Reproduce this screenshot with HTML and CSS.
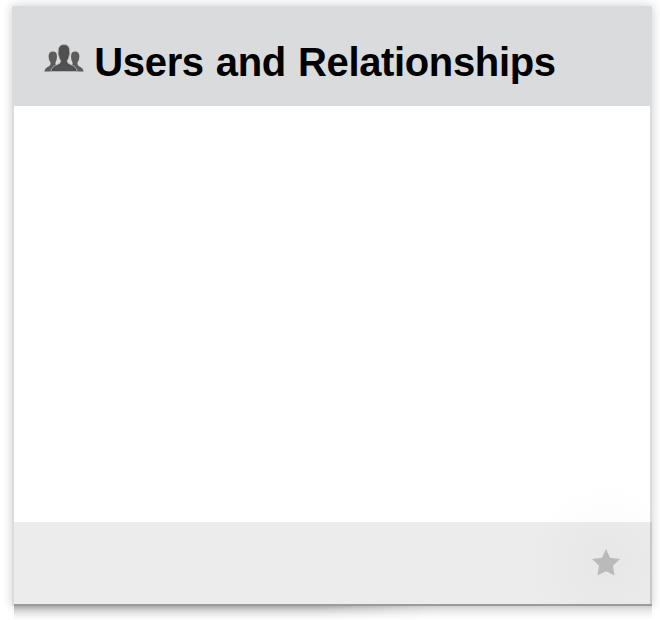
FILE: index.html
```html
<!DOCTYPE html>
<html lang="en">
<head>
<meta charset="utf-8">
<title>Users and Relationships</title>
<link rel="stylesheet" href="styles.css">
</head>
<body>
<section class="card">
  <header class="card-header">
    <svg class="users-icon" viewBox="0 0 40 28" aria-hidden="true">
      <g class="person-side">
        <path id="side" d="M0.300 27.500Q0.500 24.500 3.500 23Q7 21.500 6.500 18.500Q4.600 16 4.600 12.500Q4.600 7.500 9 7.500Q13 7.500 13 12.500Q13 16 11.500 18.500L11.500 20.500L14 22L7.500 27.500Z"/>
        <use href="#side" transform="translate(40 0) scale(-1 1)"/>
      </g>
      <path class="person-main" d="M6.800 27.500Q7.500 22.500 13.500 20.500Q17 19.300 16.600 16.500Q14.900 14.500 14.600 11.500Q13.600 10 14.200 8Q13.800 0.500 20 0.500Q26 0.500 25.700 8Q26.300 10 25.300 11.500Q25 14.500 23.300 16.500Q23 19.300 26.500 20.500Q32.500 22.500 33.200 27.500Z"/>
    </svg>
    <h1 class="title">Users and Relationships</h1>
  </header>
  <div class="card-body"></div>
  <footer class="card-footer">
    <svg class="star-icon" viewBox="0 0 28 27" aria-hidden="true">
      <path d="M14 0L18 8.700L28 10L20.900 16.800L22.600 26.500L14 22.300L5.400 26.500L7.100 16.800L0 10L10 8.700Z"/>
    </svg>
  </footer>
</section>
</body>
</html>
```

FILE: styles.css
```css
* {
  box-sizing: border-box;
}

body {
  margin: 0;
  height: 620px;
  padding: 6px 8px 0 12px;
  overflow: hidden;
  background: #fff;
  font-family: "Liberation Sans", Arial, sans-serif;
}

.card {
  position: relative;
  display: flex;
  flex-direction: column;
  width: 640px;
  height: 600px;
  border: 2px solid #dcdcdd;
  border-top: 0;
  border-bottom: 0;
  background: #fff;
  box-shadow: 0 0 10px rgba(0, 0, 0, 0.2);
}

/* Soft shade along the lower edge, fading to the right */
.card::after {
  content: "";
  position: absolute;
  left: 0;
  right: -2px;
  top: 598px;
  height: 16px;
  background:
    linear-gradient(90deg, transparent 48%, rgba(255, 255, 255, 0.45) 66%) 0 2px no-repeat,
    linear-gradient(#9b9c9c 0 2px, #aaa 2px, #d2d2d2 6px, #efefef 11px, #fff 16px);
}

.card-header {
  display: flex;
  align-items: flex-start;
  gap: 11px;
  height: 100px;
  margin: 0 -2px;
  padding: 38px 0 0 32px;
  background: #dadbdd;
}

.users-icon {
  width: 40px;
  height: 28px;
}

.person-side {
  fill: #5c5c5c;
}

.person-main {
  fill: #505050;
  stroke: #b9babb;
  stroke-width: 0.8;
}

.title {
  margin: -5px 0 0 -0.7px;
  font-size: 40px;
  line-height: 46px;
  font-weight: 700;
  letter-spacing: -0.35px;
  word-spacing: 1.3px;
  color: #000;
  white-space: nowrap;
}

.card-body {
  height: 416px;
  background: radial-gradient(circle 80px at 592px 456px, #fafafa, #fff);
}

.card-footer {
  display: flex;
  justify-content: flex-end;
  height: 84px;
  margin-right: -2px;
  padding: 27px 30px 0 0;
  border-right: 2px solid #c8c8c8;
  background: radial-gradient(circle 80px at 592px 40px, #e7e7e7, #ececec);
}

.star-icon {
  width: 28px;
  height: 27px;
  fill: #bababa;
}
```
